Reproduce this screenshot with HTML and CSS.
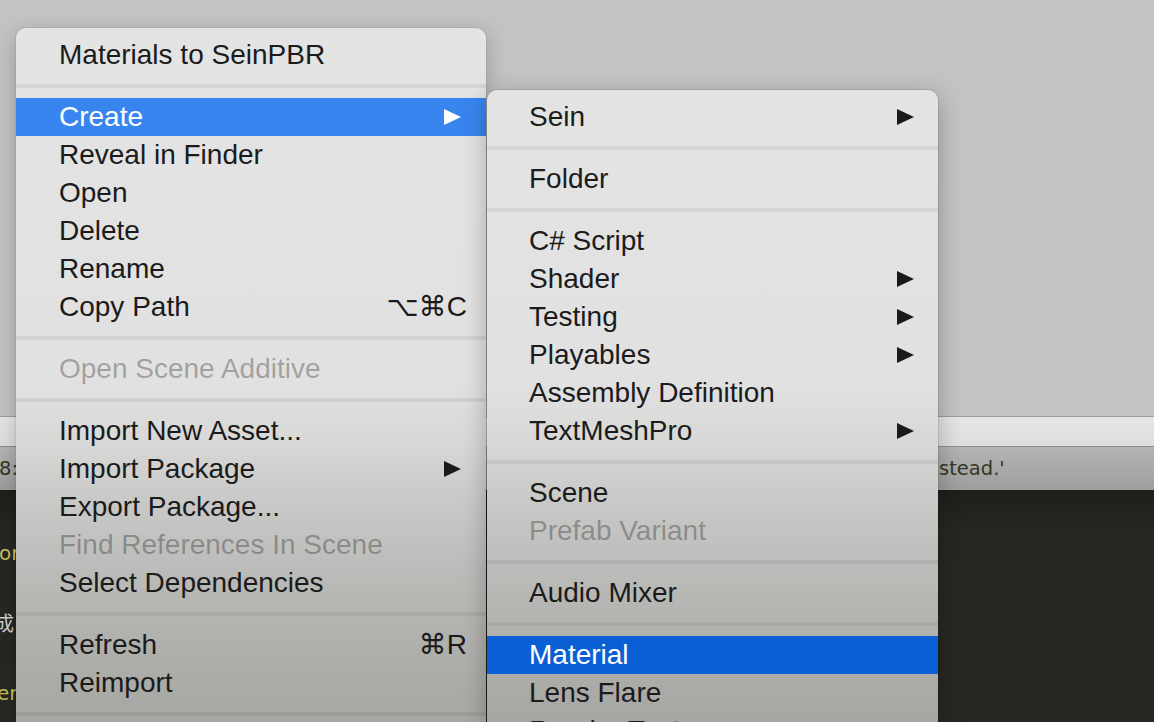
FILE: index.html
```html
<!DOCTYPE html>
<html>
<head>
<meta charset="utf-8">
<title>Context menu</title>
<link rel="stylesheet" href="styles.css">
</head>
<body>
<div class="desktop">
  <div class="top-panel"></div>
  <div class="tab-strip"></div>
  <div class="status-bar">
    <div class="status-cell"><span class="status-left">8:</span></div>
    <div class="status-cell"><span class="status-right">stead.'</span></div>
  </div>
  <div class="console">
    <div class="console-line yellow shift1">or</div>
    <div class="console-line white shift2">成</div>
    <div class="console-line yellow shift3">er</div>
  </div>
</div>

<div class="menu menu-main">
  <div class="item"><span class="label">Materials to SeinPBR</span></div>
  <div class="sep"></div>
  <div class="item active-light"><span class="label">Create</span><svg class="arrow" viewBox="0 0 17 16"><polygon points="0,0 17,8 0,16"/></svg></div>
  <div class="item"><span class="label">Reveal in Finder</span></div>
  <div class="item"><span class="label">Open</span></div>
  <div class="item"><span class="label">Delete</span></div>
  <div class="item"><span class="label">Rename</span></div>
  <div class="item"><span class="label">Copy Path</span><span class="key">⌥⌘C</span></div>
  <div class="sep"></div>
  <div class="item disabled"><span class="label">Open Scene Additive</span></div>
  <div class="sep"></div>
  <div class="item"><span class="label">Import New Asset...</span></div>
  <div class="item"><span class="label">Import Package</span><svg class="arrow" viewBox="0 0 17 16"><polygon points="0,0 17,8 0,16"/></svg></div>
  <div class="item"><span class="label">Export Package...</span></div>
  <div class="item disabled"><span class="label">Find References In Scene</span></div>
  <div class="item"><span class="label">Select Dependencies</span></div>
  <div class="sep"></div>
  <div class="item"><span class="label">Refresh</span><span class="key">⌘R</span></div>
  <div class="item"><span class="label">Reimport</span></div>
  <div class="sep"></div>
</div>

<div class="menu menu-sub">
  <div class="item"><span class="label">Sein</span><svg class="arrow" viewBox="0 0 17 16"><polygon points="0,0 17,8 0,16"/></svg></div>
  <div class="sep"></div>
  <div class="item"><span class="label">Folder</span></div>
  <div class="sep"></div>
  <div class="item"><span class="label">C# Script</span></div>
  <div class="item"><span class="label">Shader</span><svg class="arrow" viewBox="0 0 17 16"><polygon points="0,0 17,8 0,16"/></svg></div>
  <div class="item"><span class="label">Testing</span><svg class="arrow" viewBox="0 0 17 16"><polygon points="0,0 17,8 0,16"/></svg></div>
  <div class="item"><span class="label">Playables</span><svg class="arrow" viewBox="0 0 17 16"><polygon points="0,0 17,8 0,16"/></svg></div>
  <div class="item"><span class="label">Assembly Definition</span></div>
  <div class="item"><span class="label">TextMeshPro</span><svg class="arrow" viewBox="0 0 17 16"><polygon points="0,0 17,8 0,16"/></svg></div>
  <div class="sep"></div>
  <div class="item"><span class="label">Scene</span></div>
  <div class="item disabled"><span class="label">Prefab Variant</span></div>
  <div class="sep"></div>
  <div class="item"><span class="label">Audio Mixer</span></div>
  <div class="sep"></div>
  <div class="item active-deep"><span class="label">Material</span></div>
  <div class="item"><span class="label">Lens Flare</span></div>
  <div class="item"><span class="label">Render Texture</span></div>
</div>
</body>
</html>
```

FILE: styles.css
```css
* { box-sizing: border-box; }

html, body {
  margin: 0;
  padding: 0;
  width: 1154px;
  height: 722px;
  overflow: hidden;
}

body {
  font-family: "Liberation Sans", "DejaVu Sans", Arial, sans-serif;
  background: #262622;
}

.desktop {
  width: 1154px;
  height: 722px;
  display: flex;
  flex-direction: column;
}

.top-panel {
  height: 417px;
  background: #c3c3c3;
  border-bottom: 1px solid #9c9c9c;
  flex: none;
}

.tab-strip {
  height: 30px;
  background: linear-gradient(to bottom, #e7e7e7, #dedede);
  border-bottom: 1px solid #8e8e8e;
  flex: none;
}

.status-bar {
  height: 43px;
  flex: none;
  display: grid;
  grid-template-columns: 938px 1fr;
  align-items: center;
  background: linear-gradient(to bottom, #b4b4b4, #9e9e9e);
  font-family: "DejaVu Sans", "Liberation Sans", sans-serif;
  font-size: 19.5px;
  color: #363622;
  overflow: hidden;
}

.status-cell {
  overflow: hidden;
  white-space: nowrap;
}

.status-left {
  display: inline-block;
  margin-left: -1px;
}

.status-right {
  display: inline-block;
  margin-left: 1px;
}

.console {
  flex: 1;
  background: linear-gradient(to bottom, #1e1e1b 0px, #262622 40px, #272723 100%);
  padding-top: 28px;
  display: flex;
  flex-direction: column;
  font-family: "DejaVu Sans", "Noto Sans CJK SC", sans-serif;
  font-size: 20px;
}

.console-line {
  height: 70px;
  line-height: 70px;
  white-space: nowrap;
}

.yellow { color: #c8c25c; }
.white { color: #cfcfcf; font-family: "Noto Sans CJK SC", sans-serif; }
.shift1 { margin-left: -1px; }
.shift2 { margin-left: -6px; }
.shift3 { margin-left: -3px; }

/* Menus */
.menu {
  position: absolute;
  border-radius: 10px 10px 0 0;
  padding-top: 8px;
  background: linear-gradient(to bottom,
    #e4e4e4 0px,
    #e1e1e1 380px,
    #d8d8d7 440px,
    #c9c9c8 500px,
    #bbbbb9 570px,
    #b0b0ad 640px,
    #a6a6a3 722px) fixed;
  color: #1b1b1b;
  font-size: 28px;
  overflow: hidden;
}

.menu-main {
  left: 16px;
  top: 28px;
  width: 470px;
  height: 694px;
  box-shadow: 0 0 0 1px rgba(0, 0, 0, 0.06), 0 6px 22px rgba(0, 0, 0, 0.22);
}

.menu-sub {
  left: 487px;
  top: 90px;
  width: 451px;
  height: 632px;
  box-shadow: 0 0 0 1px rgba(0, 0, 0, 0.08), 0 6px 24px rgba(0, 0, 0, 0.28);
}

.item {
  height: 38px;
  line-height: 38px;
  padding: 0 25px 0 43px;
  display: flex;
  align-items: center;
  justify-content: space-between;
  white-space: nowrap;
}

.menu-sub .item {
  padding-left: 42px;
  padding-right: 24px;
}

.label {
  line-height: 38px;
}

.key {
  margin-right: -6px;
}

.arrow {
  width: 17px;
  height: 16px;
  fill: #1a1a1a;
  flex: none;
}

.disabled { color: rgba(0, 0, 0, 0.3); }

.active-light {
  background: #3885f0;
  color: #ffffff;
}

.active-light .arrow { fill: #ffffff; }

.active-deep {
  background: #0b5fd4;
  color: #ffffff;
}

.sep {
  height: 24px;
  display: flex;
  align-items: center;
}

.sep::after {
  content: "";
  display: block;
  width: 100%;
  height: 4px;
  background: rgba(0, 0, 0, 0.06);
}
```
